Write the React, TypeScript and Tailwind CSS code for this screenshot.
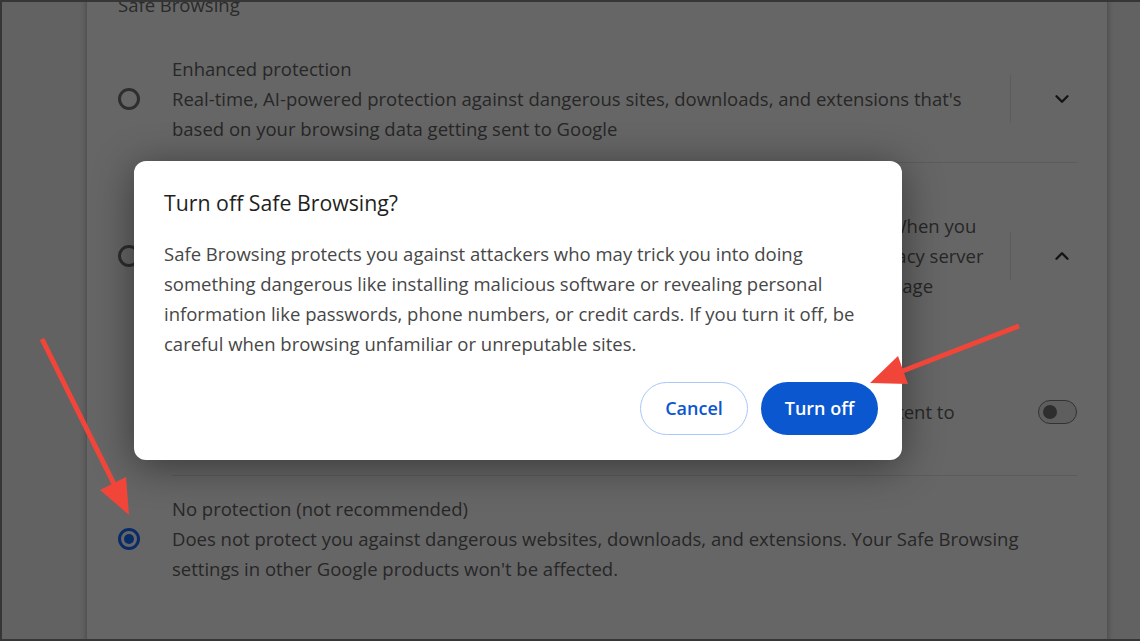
import React from "react";
import { ChevronDown, ChevronUp } from "lucide-react";

const font = "font-['Open_Sans','Noto_Sans',sans-serif]";

const Radio = ({ checked }: { checked?: boolean }) =>
  checked ? (
    <div className="w-[22px] h-[22px] rounded-full border-[3px] border-[#0a2c66] flex items-center justify-center">
      <div className="w-[10px] h-[10px] rounded-full bg-[#0a2c66]" />
    </div>
  ) : (
    <div className="w-[22px] h-[22px] rounded-full border-[3px] border-[#2e2e2e]" />
  );

const Expander = ({ up }: { up?: boolean }) => (
  <div className="flex items-center self-center h-[48px]">
    <div className="w-px h-full bg-[#5c5c5c]" />
    <div className="w-[66px] flex justify-end pr-[4px]">
      {up ? (
        <ChevronUp size={22} strokeWidth={2.6} className="text-[#141414]" />
      ) : (
        <ChevronDown size={22} strokeWidth={2.6} className="text-[#141414]" />
      )}
    </div>
  </div>
);

interface OptionRowProps {
  title: string;
  lines: string[];
  checked?: boolean;
  expander?: "up" | "down";
  className?: string;
}

const OptionRow: React.FC<OptionRowProps> = ({ title, lines, checked, expander, className }) => (
  <div className={"flex items-center " + (className ?? "")}>
    <div className="w-[54px] shrink-0">
      <Radio checked={checked} />
    </div>
    <div className="flex-1 min-w-0 text-[18.5px] leading-[30px] text-[#272727]">
      <div className="whitespace-nowrap">{title}</div>
      {lines.map((l) => (
        <div key={l} className="whitespace-nowrap">
          {l}
        </div>
      ))}
    </div>
    {expander && <Expander up={expander === "up"} />}
  </div>
);

const Arrows = () => (
  <svg
    className="absolute inset-0 pointer-events-none"
    width={1140}
    height={641}
    viewBox="0 0 1140 641"
  >
    <line x1={40} y1={337} x2={113} y2={484} stroke="#f2453a" strokeWidth={5} />
    <polygon points="127,513 98,488 124,475" fill="#f2453a" />
    <line x1={1017} y1={324} x2={898} y2={370} stroke="#f2453a" strokeWidth={5} />
    <polygon points="868,381 896,354 906,382" fill="#f2453a" />
  </svg>
);

export default function App() {
  return (
    <div
      className={
        "relative w-[1140px] h-[641px] overflow-hidden bg-[#626262] border-t-2 border-l-2 border-b-2 border-[#363636] " +
        font
      }
    >
      {/* settings card behind the dialog */}
      <div className="ml-[85px] w-[1020px] h-[700px] bg-[#666666] shadow-[0_0_6px_rgba(0,0,0,0.35)] pl-[31px] pr-[30px] mt-[-12px]">
        <div className="h-[30px] text-[18.5px] leading-[30px] text-[#2a2a2a] font-medium">Safe Browsing</div>

        <OptionRow
          className="pt-[34px] pb-[18px]"
          title="Enhanced protection"
          lines={[
            "Real-time, AI-powered protection against dangerous sites, downloads, and extensions that's",
            "based on your browsing data getting sent to Google",
          ]}
          expander="down"
        />

        <div className="ml-[54px] border-t border-[#5c5c5c]" />

        <OptionRow
          className="pt-[18px]"
          title="Standard protection"
          lines={[
            "Protects against sites, downloads, and extensions that are known to be dangerous. When you",
            "visit a site, Chrome sends an obfuscated portion of the URL to Google through a privacy server",
            "that hides your IP address. If a site does something suspicious, full URLs and bits of page",
            "content are also sent.",
          ]}
          expander="up"
        />

        <div className="ml-[54px] flex items-center pt-[36px] pb-[18px]">
          <div className="flex-1 text-[18.5px] leading-[30px] text-[#272727]">
            <div className="whitespace-nowrap">Help improve security on the web for everyone</div>
            <div className="whitespace-nowrap">
              Sends URLs of some pages you visit, limited system information, and some page content to
            </div>
            <div className="whitespace-nowrap">Google, to help discover new threats.</div>
          </div>
          <div className="w-[39px] h-[24px] rounded-full border-[1.5px] border-[#333333] bg-[#5e5e5e] flex items-center pl-[4px]">
            <div className="w-[14px] h-[14px] rounded-full bg-[#2e2e2e]" />
          </div>
        </div>

        <div className="ml-[54px] border-t border-[#5c5c5c]" />

        <OptionRow
          className="pt-[18px]"
          title="No protection (not recommended)"
          lines={[
            "Does not protect you against dangerous websites, downloads, and extensions. Your Safe Browsing",
            "settings in other Google products won't be affected.",
          ]}
          checked
        />
      </div>

      {/* modal dialog */}
      <div className="absolute left-[132px] top-[159px] w-[768px] h-[299px] bg-white rounded-[12px] shadow-[0_6px_40px_rgba(0,0,0,0.45)] pl-[30px] pr-[24px] pt-[28px]">
        <div className="text-[21.3px] leading-[28px] text-[#1f1f1f]">Turn off Safe Browsing?</div>
        <div className="mt-[22px] text-[18.5px] leading-[30px] text-[#474747]">
          <div className="whitespace-nowrap">Safe Browsing protects you against attackers who may trick you into doing</div>
          <div className="whitespace-nowrap">something dangerous like installing malicious software or revealing personal</div>
          <div className="whitespace-nowrap">information like passwords, phone numbers, or credit cards. If you turn it off, be</div>
          <div className="whitespace-nowrap">careful when browsing unfamiliar or unreputable sites.</div>
        </div>
        <div className="mt-[23px] flex justify-end gap-[13px]">
          <button className="w-[108px] h-[53px] rounded-full border border-[#a8c7fa] text-[#0b57d0] text-[18px] font-semibold">
            Cancel
          </button>
          <button className="w-[117px] h-[53px] rounded-full bg-[#0b57d0] text-white text-[18px] font-semibold">
            Turn off
          </button>
        </div>
      </div>

      <Arrows />
    </div>
  );
}
